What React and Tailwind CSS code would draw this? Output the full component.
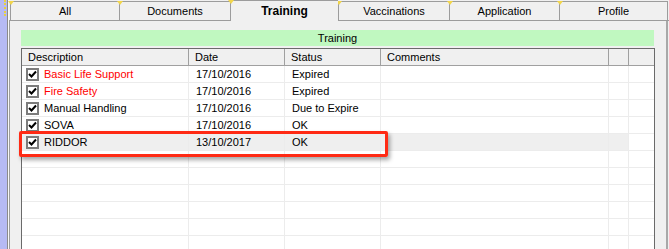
import React from 'react';

const tabs = [
    { label: 'All', w: 109 },
    { label: 'Documents', w: 111 },
    { label: 'Training', w: 108, active: true },
    { label: 'Vaccinations', w: 111 },
    { label: 'Application', w: 110 },
    { label: 'Profile', w: 108 },
];

const cols = [
    { key: 'desc', label: 'Description', w: 'w-[167px]' },
    { key: 'date', label: 'Date', w: 'w-[96px]' },
    { key: 'status', label: 'Status', w: 'w-[96px]' },
    { key: 'comments', label: 'Comments', w: 'w-[228px]' },
    { key: 'x1', label: '', w: 'w-[20px]' },
    { key: 'x2', label: '', w: 'w-[25px]' },
];

const rows = [
    { desc: 'Basic Life Support', date: '17/10/2016', status: 'Expired', red: true },
    { desc: 'Fire Safety', date: '17/10/2016', status: 'Expired', red: true },
    { desc: 'Manual Handling', date: '17/10/2016', status: 'Due to Expire' },
    { desc: 'SOVA', date: '17/10/2016', status: 'OK' },
    { desc: 'RIDDOR', date: '13/10/2017', status: 'OK', selected: true },
];

const Check = () => (
    <div className="w-[13px] h-[13px] shrink-0 border-2 border-[#7c7c7c] bg-white flex items-center justify-center">
        <svg width="9" height="9" viewBox="0 0 9 9">
            <path d="M1 4 L3.5 6.5 L8 1.5" stroke="#000" strokeWidth="2" fill="none" />
        </svg>
    </div>
);

const Tab = ({ label, w, active }) => (
    <div
        style={{ width: w }}
        className={`relative flex items-center justify-center border-l border-t border-[#9c9c9c] rounded-tl-[3px] ${active
            ? 'h-[21px] -mb-px bg-[#f0f0f0] z-10 font-bold text-[12px]'
            : 'h-[19px] bg-[#f0f0f0]'
            }`}
    >
        <div className="absolute -top-px -left-[3px] w-0 h-0 border-l-[3px] border-r-[3px] border-t-[4px] border-l-transparent border-r-transparent border-t-[#f2d64b]"></div>
        {label}
    </div>
);

export default function App() {
    const emptyRows = Array.from({ length: 6 });

    return (
        <div
            className="w-[669px] h-[249px] overflow-hidden bg-[#f0f0f0] flex text-[11px] text-black relative"
            style={{ fontFamily: '"Liberation Sans", Arial, sans-serif' }}
        >
            {/* left frame strip */}
            <div className="w-[7px] bg-[#b6baf3] relative shrink-0">
                <div className="absolute left-[4px] top-0 h-[16px] border-l-2 border-dotted border-[#e8d040]"></div>
            </div>
            <div className="w-px bg-[#8a8a8a] shrink-0"></div>
            <div className="w-px bg-[#f8f8f8] shrink-0"></div>

            <div className="flex flex-col flex-1">
                {/* tab strip */}
                <div className="h-[22px] flex items-end pl-px">
                    {tabs.map((t) => (
                        <Tab key={t.label} {...t} />
                    ))}
                    <div className="w-[2px] h-[19px] border-l border-[#9c9c9c]"></div>
                </div>

                {/* tab page */}
                <div className="flex-1 border-t border-l border-[#9c9c9c] pt-[9px] pl-[11px] pr-[12px] relative">
                    <div className="absolute right-[1px] top-0 bottom-0 w-[2px] bg-[#a8a8a8]"></div>

                    <div className="h-[16px] bg-[#c0f8c0] flex items-center justify-center w-[633px]">
                        Training
                    </div>

                    <div className="mt-[2px] w-[634px] border-l border-r border-t border-[#6a6a6a] bg-white">
                        {/* header */}
                        <div className="flex h-[17px] bg-[#f0f0f0] border-b border-[#a0a0a0]">
                            {cols.map((c) => (
                                <div
                                    key={c.key}
                                    className={`${c.w} shrink-0 border-r border-[#a0a0a0] last:border-r-0 flex items-center pl-[6px]`}
                                >
                                    {c.label}
                                </div>
                            ))}
                        </div>

                        {rows.map((r) => (
                            <div key={r.desc} className="flex h-[17px] border-b border-[#ececec]">
                                <div className={`w-[167px] shrink-0 border-r border-[#ececec] flex items-center pl-[4px] gap-[5px] ${r.selected ? 'bg-[#efefef]' : ''}`}>
                                    <Check />
                                    <span className={r.red ? 'text-[#ff0000]' : ''}>{r.desc}</span>
                                </div>
                                <div className={`w-[96px] shrink-0 border-r border-[#ececec] flex items-center pl-[7px] ${r.selected ? 'bg-[#efefef]' : ''}`}>
                                    {r.date}
                                </div>
                                <div className={`w-[96px] shrink-0 border-r border-[#ececec] flex items-center pl-[7px] ${r.selected ? 'bg-[#efefef]' : ''}`}>
                                    {r.status}
                                </div>
                                <div className={`w-[228px] shrink-0 border-r border-[#ececec] ${r.selected ? 'bg-[#efefef]' : ''}`}></div>
                                <div className={`w-[20px] shrink-0 border-r border-[#ececec] ${r.selected ? 'bg-[#efefef]' : ''}`}></div>
                                <div className="w-[25px] shrink-0"></div>
                            </div>
                        ))}

                        {emptyRows.map((_, i) => (
                            <div key={i} className="flex h-[17px] border-b border-[#ececec]">
                                <div className="w-[167px] shrink-0 border-r border-[#ececec]"></div>
                                <div className="w-[96px] shrink-0 border-r border-[#ececec]"></div>
                                <div className="w-[96px] shrink-0 border-r border-[#ececec]"></div>
                                <div className="w-[228px] shrink-0 border-r border-[#ececec]"></div>
                                <div className="w-[20px] shrink-0 border-r border-[#ececec]"></div>
                                <div className="w-[25px] shrink-0"></div>
                            </div>
                        ))}
                    </div>
                </div>
            </div>

            {/* annotation highlight */}
            <div className="absolute left-[19px] top-[131px] w-[369px] h-[26px] border-[3px] border-[#ff2a14] rounded-[2px] shadow-[2px_3px_4px_rgba(0,0,0,0.35)]"></div>
        </div>
    );
}
